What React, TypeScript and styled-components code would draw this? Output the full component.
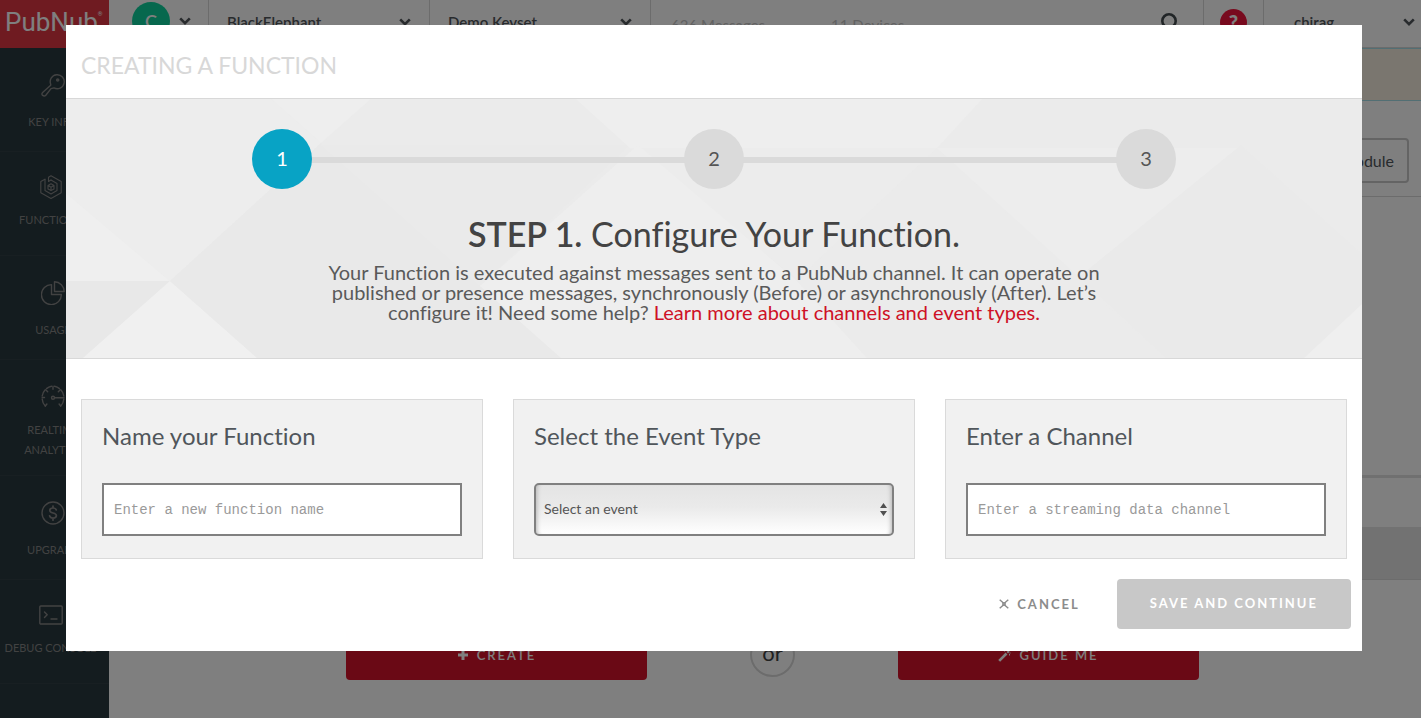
import React from "react";
import styled, { createGlobalStyle } from "styled-components";

const Global = createGlobalStyle`
  *, *::before, *::after { box-sizing: border-box; }
  body { margin: 0; background: #fff; color: #434343; font-family: Lato, "Open Sans", sans-serif; font-size: 14px; font-variant-ligatures: none; }
  h1, h2, h3, p { margin: 0; font-weight: 400; }
  button, input, select { font-family: inherit; }
`;

/* ---------- page behind the dialog ---------- */

const Page = styled.div`
  display: grid;
  grid-template: 48px 1fr / 109px 1fr;
  height: 100vh;
  min-height: 700px;
  overflow: hidden;
`;

const Brand = styled.a`
  display: flex;
  align-items: center;
  padding: 0 0 4px 5px;
  background: #de3642;
  color: #fff;
  font: 400 26px/44px Roboto, sans-serif;
  text-decoration: none;
  sup { font-size: 6px; line-height: 8px; align-self: flex-start; margin-top: 10px; }
`;

const TopBar = styled.header`
  display: flex;
  height: 48px;
  border-bottom: 1px solid #d8d8d8;
`;

const TopCell = styled.div<{ $width?: number; $grow?: boolean; $last?: boolean }>`
  display: flex;
  align-items: center;
  flex: ${p => (p.$grow ? "1 1 auto" : `0 0 ${p.$width}px`)};
  height: 47px;
  padding-bottom: 3px;
  border-right: ${p => (p.$last ? "0" : "1px solid #d8d8d8")};
`;

const PickerButton = styled.button<{ $user?: boolean }>`
  display: flex;
  align-items: center;
  justify-content: space-between;
  width: 100%;
  padding: ${p => (p.$user ? "0 6px 0 30px" : "0 18px")};
  border: 0;
  background: none;
  color: #50565b;
  font-size: 15px;
  font-weight: 600;
  line-height: 20px;
`;

const AccountButton = styled.button`
  display: flex;
  align-items: center;
  gap: 9px;
  padding: 0 0 2px 23px;
  border: 0;
  background: none;
  color: #50565b;
`;

const Avatar = styled.span`
  display: flex;
  align-items: center;
  justify-content: center;
  width: 38px;
  height: 38px;
  border-radius: 50%;
  background: #0ed09c;
  color: #fff;
  font-size: 18px;
  font-weight: 600;
`;

const Stats = styled.div`
  display: flex;
  flex: 1;
  gap: 66px;
  padding: 6px 20px 0;
  color: #c4c4c4;
  font-size: 15px;
  line-height: 20px;
`;

const IconButton = styled.button`
  display: flex;
  margin: 0 auto;
  padding: 0;
  border: 0;
  background: none;
  color: #434a4f;
`;

const SearchButton = styled(IconButton)`
  margin: 0 23px 0 0;
`;

const HelpBadge = styled.span`
  width: 27px;
  height: 27px;
  border-radius: 50%;
  background: #f0143c;
  color: #fff;
  font-size: 20px;
  font-weight: 900;
  line-height: 26px;
`;

const Sidebar = styled.nav`
  background: #28383e;
`;

const NavItem = styled.a<{ $compact?: boolean; $tall?: boolean }>`
  display: flex;
  flex-direction: column;
  align-items: center;
  gap: ${p => (p.$tall || p.$compact ? 11 : 15)}px;
  height: ${p => (p.$tall ? 116 : 104)}px;
  padding: ${p => (p.$compact ? "23px 8px 0 0" : "25px 3px 0 0")};
  border-bottom: 1px solid #303f45;
  color: #858585;
  font-size: 11px;
  line-height: 20px;
  text-align: center;
  text-decoration: none;
  white-space: nowrap;
  svg { flex: none; }
`;

const Main = styled.main`
  background: #fff;
`;

const Notice = styled.div`
  height: 53px;
  border: solid #a5dfe8;
  border-width: 1px 0;
  background: #f4ecde;
`;

const Toolbar = styled.div`
  display: flex;
  justify-content: flex-end;
  padding: 37px 12px 13px;
  border-bottom: 1px solid #d8d8d8;
`;

const OutlineButton = styled.button`
  height: 45px;
  padding: 0 13px;
  border: 2px solid #c8c8c8;
  border-radius: 4px;
  background: none;
  color: #50565b;
  font-size: 16px;
`;

const Workspace = styled.div`
  height: 281px;
  border-bottom: 3px solid #e0e0e0;
`;

const Band = styled.div<{ $dark?: boolean }>`
  height: ${p => (p.$dark ? 53 : 49)}px;
  background: ${p => (p.$dark ? "#e4e4e4" : "#fff")};
  border-bottom: ${p => (p.$dark ? "1px solid #d8d8d8" : "0")};
`;

const Actions = styled.div`
  display: flex;
  align-items: center;
  justify-content: center;
  gap: 103px;
  padding: 50px 0 0 15px;
`;

const RedButton = styled.button`
  display: flex;
  align-items: center;
  justify-content: center;
  gap: 8px;
  width: 301px;
  height: 50px;
  border: 0;
  border-radius: 4px;
  background: #d5132a;
  color: #fff;
  font-size: 13px;
  font-weight: 600;
  letter-spacing: 2px;
`;

const Or = styled.span`
  width: 45px;
  height: 45px;
  margin-bottom: 1px;
  border: 2px solid #d8d8d8;
  border-radius: 50%;
  color: #434343;
  font-size: 22px;
  line-height: 38px;
  text-align: center;
`;

/* ---------- dialog ---------- */

const Overlay = styled.div`
  position: fixed;
  inset: 0;
  display: flex;
  align-items: flex-start;
  padding: 25px 59px 0 66px;
  background: rgba(0, 0, 0, 0.5);
`;

const Dialog = styled.section`
  flex: 1;
  min-width: 0;
  padding-bottom: 22px;
  background: #fff;
`;

const DialogTitle = styled.h1`
  padding: 25px 15px 18px;
  color: #d8d8d8;
  font-size: 23px;
  line-height: 30px;
`;

const Intro = styled.div`
  position: relative;
  padding: 30px 0 36px;
  border: solid #d8d8d8;
  border-width: 1px 0;
  background: #ebebeb;
`;

const Facets = styled.svg`
  position: absolute;
  inset: 0;
  width: 100%;
  height: 100%;
`;

const Steps = styled.ol`
  position: relative;
  display: grid;
  grid-template-columns: repeat(3, 1fr);
  margin: 0;
  padding: 0;
  list-style: none;
`;

const Step = styled.li<{ $active?: boolean; $last?: boolean }>`
  position: relative;
  display: flex;
  justify-content: center;
  &::before {
    content: ${p => (p.$last ? "none" : '""')};
    position: absolute;
    top: 28px;
    left: 50%;
    width: 100%;
    height: 6px;
    background: #dadada;
  }
  span {
    position: relative;
    width: 60px;
    height: 60px;
    border-radius: 50%;
    background: ${p => (p.$active ? "#08a3c5" : "#dadada")};
    color: ${p => (p.$active ? "#fff" : "#555")};
    font-size: 20px;
    line-height: 58px;
    text-align: center;
  }
`;

const StepText = styled.div`
  position: relative;
  padding-top: 25px;
  text-align: center;
`;

const StepHeading = styled.h2`
  color: #434343;
  font-size: 34px;
  line-height: 40px;
  strong { font-weight: 600; }
`;

const StepBody = styled.p`
  max-width: 800px;
  margin: 8px auto 0;
  color: #5a5a5a;
  font-size: 20px;
  line-height: 20px;
  a { color: #ce1126; text-decoration: none; }
`;

const Cards = styled.form`
  display: grid;
  grid-template-columns: repeat(3, 1fr);
  gap: 30px;
  padding: 40px 15px 20px;
`;

const Card = styled.div`
  padding: 20px 20px 22px;
  border: 1px solid #dadada;
  background: #f1f1f1;
`;

const CardLabel = styled.label`
  display: block;
  margin-bottom: 32px;
  color: #50565b;
  font-size: 24px;
  line-height: 31px;
`;

const TextInput = styled.input`
  display: block;
  width: 100%;
  height: 53px;
  padding: 0 10px;
  border: 2px solid #808080;
  border-radius: 0;
  background: #fff;
  font: 14px "Liberation Mono", monospace;
  &::placeholder { color: #9a9a9a; opacity: 1; }
`;

const SelectWrap = styled.div`
  position: relative;
  svg { position: absolute; right: 7px; top: 20px; pointer-events: none; }
`;

const EventSelect = styled.select`
  display: block;
  appearance: none;
  width: 100%;
  height: 53px;
  padding: 0 8px 2px;
  border: 2px solid #808080;
  border-radius: 5px;
  background: linear-gradient(#e4e4e4, #eaeaea 45%, #fff);
  box-shadow: inset 5px 0 4px -4px #b4b4b4, inset -5px 0 4px -4px #b4b4b4;
  color: #555;
  font-size: 14px;
`;

const Footer = styled.footer`
  display: flex;
  justify-content: flex-end;
  gap: 4px;
  padding-right: 11px;
`;

const FooterButton = styled.button<{ $primary?: boolean }>`
  display: flex;
  align-items: center;
  gap: 8px;
  height: 50px;
  padding: ${p => (p.$primary ? "0 33px 2px" : "0 33px")};
  border: 0;
  border-radius: 4px;
  background: ${p => (p.$primary ? "#c8c8c8" : "none")};
  color: ${p => (p.$primary ? "#fff" : "#8c8c8c")};
  font-size: 13px;
  font-weight: 700;
  letter-spacing: 2px;
`;

/* ---------- icons ---------- */

const Line = ({ children, sw = 1.4 }: { children: React.ReactNode; sw?: number }) => (
  <svg width="24" height="24" viewBox="0 0 24 24" fill="none" stroke="currentColor" strokeWidth={sw} strokeLinecap="round" strokeLinejoin="round" aria-hidden="true">
    {children}
  </svg>
);

const Chevron = () => (
  <svg width="12" height="8" viewBox="0 0 12 8" fill="none" stroke="currentColor" strokeWidth="2.6" aria-hidden="true">
    <path d="M1.2 1.3 6 6.1l4.8-4.8" />
  </svg>
);

const KeyIcon = () => (
  <Line>
    <path d="M9.7 11.2A7 7 0 1 1 13 14.9L10 15.6 4.8 22.2c-.8.9-2.3.9-3.2.2-.9-.8-.9-2 0-2.8L9.700 12.200z" />
    <circle cx="16.7" cy="7" r="1.1" fill="currentColor" />
  </Line>
);

const FunctionsIcon = () => (
  <Line sw={1.1}>
    <path d="M6 4.200 1.800 6.500v11.200L12 23.400l10.200-5.700V6.500L12 .8 9.500 2.200v4.200L12 5" />
    <path d="M6 4.200v11.400L12 19l6-3.400V8.400L12 5" />
    <path d="m12 8.800 3 1.700v3.400l-3 1.700-3-1.700v-3.400zM12 12.200v3M12 12.200l-2.800-1.600M12 12.200l2.800-1.600" />
  </Line>
);

const PieIcon = () => (
  <Line>
    <path d="M10.500 3.600A10 10 0 1 0 20.400 13.500H10.500z" />
    <path d="M13.500.8v9.700h9.700A9.700 9.700 0 0 0 13.500.8z" />
  </Line>
);

const GaugeIcon = () => (
  <Line>
    <path d="M4.300 21A11 11 0 0 1 1.200 14M1.200 11A11 11 0 0 1 4 5M5.500 3.600A11 11 0 0 1 10.500 1.300M13.500 1.300A11 11 0 0 1 18.500 3.600M20 5A11 11 0 0 1 22.800 11M22.800 14A11 11 0 0 1 19.700 21" />
    <path d="M12 1.200v3M4.700 4.800l2 2M19.300 4.800l-2 2M1.200 12.500h2.300M4.300 21l1.600-2M19.700 21l-1.600-2M14 12.800h9" />
    <circle cx="12" cy="12.800" r="1.500" />
  </Line>
);

const DollarIcon = () => (
  <Line>
    <circle cx="12" cy="12" r="11" />
    <path strokeWidth="1.700" d="M15.300 9c-.5-1.500-1.700-2-3.300-2-1.800 0-3.200.9-3.200 2.400 0 3.400 6.600 1.700 6.600 5.200 0 1.500-1.500 2.500-3.400 2.500S9 16.300 8.600 14.800M12 5v2M12 17.200v2" />
  </Line>
);

const ConsoleIcon = () => (
  <Line>
    <rect x=".8" y="3" width="22.400" height="18" rx="1" />
    <path d="m5.500 9 2.700 2.800-2.700 2.800M12 16h6" />
  </Line>
);

const SearchIcon = () => (
  <svg width="20" height="20" viewBox="0 0 20 20" fill="none" stroke="currentColor" strokeWidth="2.600" aria-hidden="true">
    <circle cx="9" cy="9" r="6.700" />
    <path d="m13.500 13.500 5 5" />
  </svg>
);

const CancelIcon = () => (
  <svg width="10" height="10" viewBox="0 0 10 10" fill="none" stroke="currentColor" strokeWidth="1.400" aria-hidden="true">
    <path d="M.7.700 3.600 3.300Q5 4.500 6.400 3.300L9.300.7M.7 9.300l2.900-2.600Q5 5.500 6.400 6.700l2.900 2.600M3.600 3.300Q4.400 5 3.600 6.700M6.400 3.300Q5.600 5 6.400 6.700" />
  </svg>
);

const PlusIcon = () => (
  <svg width="12" height="12" viewBox="0 0 12 12" stroke="currentColor" strokeWidth="3" aria-hidden="true">
    <path d="M6 1v10M1 6h10" />
  </svg>
);

const WandIcon = () => (
  <svg width="13" height="13" viewBox="0 0 13 13" fill="none" stroke="currentColor" aria-hidden="true">
    <path strokeWidth="2.600" d="m1.200 11.800 7.300-7.300" />
    <path strokeWidth="2" d="m9.300 3.700 1.700-1.700" />
    <path d="M11.500 5v1.500M6.500 1v1.500M12.500 4h-1" />
  </svg>
);

const navItems = [
  { label: <>KEY INFO</>, icon: <KeyIcon /> },
  { label: <>FUNCTIONS</>, icon: <FunctionsIcon />, compact: true },
  { label: <>USAGE</>, icon: <PieIcon /> },
  { label: <>REALTIME<br />ANALYTICS</>, icon: <GaugeIcon />, tall: true },
  { label: <>UPGRADE</>, icon: <DollarIcon /> },
  { label: <>DEBUG CONSOLE</>, icon: <ConsoleIcon />, compact: true },
];

export default function App() {
  return (
    <>
      <Global />
      <Page>
        <Brand href="#home">PubNub<sup>®</sup></Brand>
        <TopBar>
          <TopCell $width={100}>
            <AccountButton aria-label="Account">
              <Avatar>C</Avatar>
              <Chevron />
            </AccountButton>
          </TopCell>
          <TopCell $width={221}><PickerButton>BlackElephant<Chevron /></PickerButton></TopCell>
          <TopCell $width={221}><PickerButton>Demo Keyset<Chevron /></PickerButton></TopCell>
          <TopCell $grow>
            <Stats><span>636 Messages</span><span>11 Devices</span></Stats>
            <SearchButton aria-label="Search"><SearchIcon /></SearchButton>
          </TopCell>
          <TopCell $width={60}>
            <IconButton aria-label="Help"><HelpBadge>?</HelpBadge></IconButton>
          </TopCell>
          <TopCell $width={157} $last>
            <PickerButton $user>chirag<Chevron /></PickerButton>
          </TopCell>
        </TopBar>
        <Sidebar>
          {navItems.map((item, i) => (
            <NavItem key={i} href="#nav" $compact={item.compact} $tall={item.tall}>
              {item.icon}
              <span>{item.label}</span>
            </NavItem>
          ))}
        </Sidebar>
        <Main>
          <Notice />
          <Toolbar><OutlineButton>Create New Module</OutlineButton></Toolbar>
          <Workspace />
          <Band />
          <Band $dark />
          <Actions>
            <RedButton><PlusIcon />CREATE</RedButton>
            <Or>or</Or>
            <RedButton><WandIcon />GUIDE ME</RedButton>
          </Actions>
        </Main>
      </Page>

      <Overlay>
        <Dialog role="dialog" aria-labelledby="dialog-title">
          <DialogTitle id="dialog-title">CREATING A FUNCTION</DialogTitle>
          <Intro>
            <Facets viewBox="0 0 1296 259" preserveAspectRatio="none" aria-hidden="true">
              <path fill="#ededed" d="M0 0H205L255 44 104 182 0 94z" />
              <path fill="#efefef" d="M0 94 104 182H0z" />
              <path fill="#e8e8e8" d="M0 182H104L17 259H0z" />
              <path fill="#f0f0f0" d="M104 182 17 259H191z" />
              <path fill="#e9e9e9" d="M104 182 255 44 495 259H191z" />
              <path fill="#eee" d="M205 0 255 44 305 0z" />
              <path fill="#ebebeb" d="M305 0H510L564 46H255z" />
              <path fill="#eaeaea" d="M255 46H564L414 187z" />
              <path fill="#eee" d="M510 0H916L871 49H564z" />
              <path fill="#ececec" d="M564 49H871L731 180z" />
              <path fill="#eee" d="M572 46 414 187 495 259H801L731 182z" />
              <path fill="#ebebeb" d="M871 49 731 182 801 259H1100L1013 182z" />
              <path fill="#ededed" d="M871 49H1175L1013 178z" />
              <path fill="#eaeaea" d="M1175 46 1013 178 1100 259H1238L1296 205V155z" />
              <path fill="#efefef" d="M1296 205 1238 259H1296z" />
            </Facets>
            <Steps>
              <Step $active><span>1</span></Step>
              <Step><span>2</span></Step>
              <Step $last><span>3</span></Step>
            </Steps>
            <StepText>
              <StepHeading><strong>STEP 1.</strong> Configure Your Function.</StepHeading>
              <StepBody>
                Your Function is executed against messages sent to a PubNub channel. It can operate on
                published or presence messages, synchronously (Before) or asynchronously (After). Let’s
                configure it! Need some help? <a href="#learn">Learn more about channels and event types.</a>
              </StepBody>
            </StepText>
          </Intro>
          <Cards>
            <Card>
              <CardLabel htmlFor="fn-name">Name your Function</CardLabel>
              <TextInput id="fn-name" placeholder="Enter a new function name" />
            </Card>
            <Card>
              <CardLabel htmlFor="fn-event">Select the Event Type</CardLabel>
              <SelectWrap>
                <EventSelect id="fn-event" defaultValue="">
                  <option value="">Select an event</option>
                </EventSelect>
                <svg width="7" height="13" viewBox="0 0 7 13" fill="#505050" aria-hidden="true">
                  <path d="M3.500 0 7 5H0zM0 8h7l-3.500 5z" />
                </svg>
              </SelectWrap>
            </Card>
            <Card>
              <CardLabel htmlFor="fn-channel">Enter a Channel</CardLabel>
              <TextInput id="fn-channel" placeholder="Enter a streaming data channel" />
            </Card>
          </Cards>
          <Footer>
            <FooterButton type="button"><CancelIcon />CANCEL</FooterButton>
            <FooterButton type="button" $primary>SAVE AND CONTINUE</FooterButton>
          </Footer>
        </Dialog>
      </Overlay>
    </>
  );
}
